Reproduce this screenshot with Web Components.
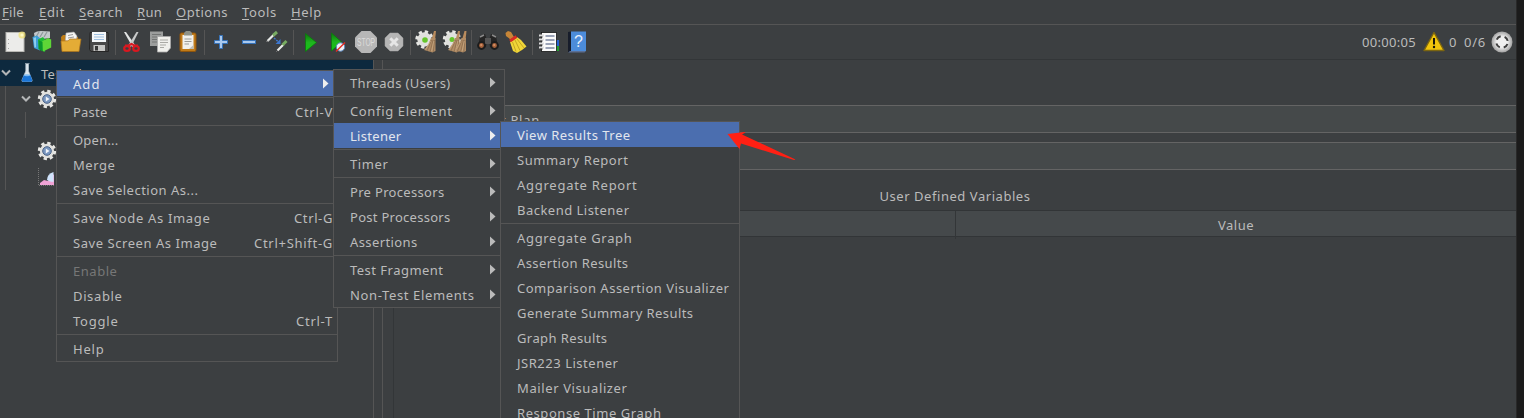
<!DOCTYPE html>
<html lang="en"><head><meta charset="utf-8"><title>JMeter</title>
<style>html,body{margin:0;height:100%;overflow:hidden;background:#1b1b1b}body{font:13px/25px "Noto Sans","Open Sans",sans-serif;color:#bbb}</style></head><body>
<jm-app></jm-app>
<script>
const define=(name,html,setup)=>customElements.define(name,class extends HTMLElement{
  connectedCallback(){
    if(this.shadowRoot)return;
    const t=document.createElement('template');
    t.innerHTML=typeof html==='function'?html(this):html;
    this.attachShadow({mode:'open'}).append(t.content.cloneNode(true));
    if(setup)setup(this);
  }
});

const gear=(s='')=>`<g ${s}><circle r="7.2" fill="#e0e0dd"/><circle r="7.8" fill="none" stroke="#e6e6e3" stroke-width="2.8" stroke-dasharray="3.3 2.826"/></g>`;
const brush=`<path d="M18.5 3 20.5 3 19.5 12 16 12Z" fill="#b98c5e"/><path d="M15.5 10 20 10 20 23 17 24.5 8.5 22 13 16Z" fill="#b08c66"/><path d="M16 12 11.5 23M17.5 12 14.5 24M19 12 17.8 24" stroke="#86694a" stroke-width=".7" fill="none"/><path d="M15.2 13 10 21.5M18.3 13 16.2 23" stroke="#d0b28c" stroke-width=".6"/>`;
const green='<linearGradient id="g" x2="0" y2="1"><stop stop-color="#0a7a0a"/><stop offset=".5" stop-color="#1fb51f"/><stop offset="1" stop-color="#12c512"/></linearGradient>';
const icons={
file:`<rect x="5" y="4.5" width="18" height="19" fill="#ececea" stroke="#b9b9b5"/><path d="M7.5 11v1M7.5 15v1M7.5 20v1" stroke="#aaa"/><circle cx="21" cy="7" r="3.6" fill="#f3e36d" opacity=".7"/><circle cx="21" cy="7" r="1.6" fill="#fff9c4"/>`,
templates:`<path d="M5 5 8 3.5 12 3 21 3.5 21 10 6 12Z" fill="#c3c9cc"/><path d="M7 9 10 4M11 9 14 4M15 9 18 4" stroke="#8f979b" fill="none" stroke-width="1.2"/><path d="M3.5 9 8 7.5 12 11 11 22.5 5 20Z" fill="#3f9fd6"/><path d="M4.5 10 7 9.3V19.5L5.5 19Z" fill="#8ccdf0"/><path d="M9 11.5 14 9 17 13 16 24 10 21Z" fill="#20bb36"/><path d="M13 13.5 19 10 22.2 11.5V19.5L14 23.5Z" fill="#5ed637"/><path d="M9.5 12V21L13.5 23.5V14Z" fill="#0b982c"/>`,
open:`<path d="M4 9 6 7H11L12 9H21L22 23H5Z" fill="#bd7c15"/><path d="M9 5 17 4 20 8 19 16 8 16Z" fill="#f5f5f3" stroke="#aaa" stroke-width=".6"/><path d="M11 7.5 16 6.5M11 10 17 9" stroke="#999"/><path d="M4 13 11 12.8 13 11 24 11 22 23.5 5 23.5Z" fill="#e4ac36" stroke="#ad741b" stroke-width=".7"/>`,
save:`<path d="M5 4.5H23L23.5 23.5H6L4.5 21.5Z" fill="#484848" stroke="#262626"/><rect x="7" y="4" width="14" height="10" fill="#f3f6f8"/><path d="M9 6.5H19M9 9H19M9 11.5H19" stroke="#9dbfe0"/><rect x="8.5" y="17" width="11.5" height="6" fill="#c6c6c4"/><rect x="10" y="18" width="3" height="4.5" fill="#383838"/>`,
cut:`<path d="M6 4 8 4 17 17 14.5 19Z" fill="#e2e4e4"/><path d="M20.5 4 18.5 4 10.5 17 13 19Z" fill="#c8caca"/><g fill="none" stroke="#d91820" stroke-width="2.2"><ellipse cx="9" cy="20.5" rx="2.8" ry="2.4"/><ellipse cx="18" cy="20.5" rx="2.8" ry="2.4"/><path d="M7 17.5H10.5L13.5 16 16.5 17.5H20"/></g>`,
copy:`<path d="M4 3.5H17V18H4Z" fill="#9c9e9d"/><path d="M6 6.5H15M6 9H15M6 11.5H11M6 14H11" stroke="#747675"/><path d="M11.5 8.5H24.5V20L21 24H11.5Z" fill="#f0f0ec" stroke="#aaa" stroke-width=".8"/><path d="M14 12H22M14 14.5H22M14 17H20M14 19.5H18" stroke="#aaaaa5"/>`,
paste:`<rect x="6" y="5" width="16" height="18.5" rx="1.5" fill="#c07b19" stroke="#90550c"/><rect x="8.5" y="7" width="11" height="14" fill="#f1f1ed"/><path d="M10 5 12 3H16L18 5V7.5H10Z" fill="#8e9187"/><path d="M10.5 11H17.5M10.5 13.5H17.5M10.5 16H15" stroke="#9b9b97"/><path d="M15 21 19.5 21 19.5 17Z" fill="#bdbdb7"/>`,
plus:`<path d="M12.5 7.5H15.5V12.5H20.5V15.5H15.5V20.5H12.5V15.5H7.5V12.5H12.5Z" fill="#aac9ee" stroke="#3672b8"/>`,
minus:`<rect x="7.5" y="12.5" width="13" height="3" fill="#aac9ee" stroke="#3672b8"/>`,
toggle:`<path d="M4.5 13 10.5 7M14.5 22.5 20.5 16.5" stroke="#e9ebe9" stroke-width="2.2"/><path d="M10 7.5 14 4M19.5 17 23.5 13" stroke="#78ab62" stroke-width="3"/><path d="M3.5 14 5 12.5M13.5 23.5 15 22" stroke="#999" stroke-width="1"/><path d="M11 10 15.5 14" stroke="#3f78ce" stroke-width="1.4" stroke-dasharray="2 1"/><path d="M17.5 11V16H12.5Z" fill="#3c77d0"/>`,
play:`${green}<path d="M9.5 5.5 20.5 14.5 9.5 23.5Z" fill="url(#g)" stroke="#0b780e" stroke-width=".8"/>`,
playnt:`${green}<path d="M7.5 5 17.5 14 7.5 23Z" fill="url(#g)" stroke="#0b780e" stroke-width=".8"/><circle cx="16.5" cy="19" r="4.2" fill="#eef1f5" stroke="#5c88c0" stroke-width="1"/><path d="M12 23.5 21 14.5" stroke="#e42b22" stroke-width="1.5"/>`,
stop:`<path d="M9.5 3H18.5L25 9.5V18.5L18.5 25H9.5L3 18.5V9.5Z" fill="#b7b7b7"/><text x="14" y="17.6" text-anchor="middle" textLength="18" lengthAdjust="spacingAndGlyphs" font-family="Liberation Sans" font-size="10" fill="#dcdcdc">STOP</text>`,
shutdown:`<path d="M10 5H18L23 10V18L18 23H10L5 18V10Z" fill="#b5b5b5" stroke="#a5a5a5" stroke-width=".5"/><path d="M10.3 10.3 17.7 17.7M17.7 10.3 10.3 17.7" stroke="#e6e6e6" stroke-width="3"/>`,
clear:`${gear('transform="translate(11.5 11.5)"')}<circle cx="12" cy="12" r="2.8" fill="#66c52c"/><g transform="translate(2.5 0)">${brush}</g>`,
clearall:`${gear('transform="translate(11 11.5)"')}<circle cx="11" cy="11.5" r="2.5" fill="#66c52c"/><g transform="translate(-1.5 0)">${brush}</g><g transform="translate(5 0)">${brush}</g>`,
search:`<path d="M6 8 11 6 13 12 12 19 4 19Z" fill="#242424"/><path d="M22 8 17 6 15 12 16 19 24 19Z" fill="#242424"/><path d="M6 9 10 7M22 9 18 7" stroke="#8a8a8a" stroke-width="1.4"/><rect x="11" y="10" width="6" height="6" fill="#555"/><g fill="#a9643c" stroke="#1c1c1c" stroke-width="2"><circle cx="7.5" cy="17.5" r="3.4"/><circle cx="20.5" cy="17.5" r="3.4"/></g><circle cx="7.2" cy="17" r="1.1" fill="#d79269"/><circle cx="20.2" cy="17" r="1.1" fill="#d79269"/>`,
broom:`<path d="M3.5 5 6 3 9 4 12 9 8.5 11.5 4 8Z" fill="#c68537"/><path d="M8 14 15 9 19 12 24.5 18.5 20 22 15 25 11 23Z" fill="#f0d638"/><path d="M10.5 14 14 23.5M13 12 18 22.5M15 11 22 20" stroke="#ba9a1c" stroke-width=".8"/><path d="M8 13 14.5 8.5" stroke="#d62c24" stroke-width="3"/>`,
list:`<rect x="20" y="12" width="4" height="6" fill="#2562d4"/><rect x="20" y="18" width="4" height="5" fill="#229b32"/><rect x="6.5" y="4.5" width="15" height="19" fill="#fafafa" stroke="#151515" stroke-width=".8"/><path d="M10.5 8H19.5M10.5 12H19.5M10.5 16H19.5M10.5 20H19.5" stroke="#3c4c74" stroke-width="1"/><path d="M4 7.5H9M4 11.5H9M4 15.5H9M4 19.5H9" stroke="#ddd" stroke-width="2"/><path d="M5 9H8M5 13H8M5 17H8M5 21H8" stroke="#333" stroke-width=".6"/>`,
help:`<path d="M5 4 8 3.5V23L5 24.5Z" fill="#171d2b"/><rect x="8" y="3.5" width="15" height="19.5" fill="#4c8cda"/><path d="M5 24.5H21.5L23 23H7Z" fill="#5b6f94"/><text x="15.4" y="19" text-anchor="middle" font-size="16" font-family="Liberation Sans" fill="#e6effb">?</text>`,
warn:`<path d="M14 4.5 24 22.5H4Z" fill="#f1c40c" stroke="#7c6610" stroke-width="1.4" stroke-linejoin="round"/><path d="M14 10V16.5" stroke="#17150b" stroke-width="2"/><circle cx="14" cy="19" r="1.2" fill="#17150b"/>`,
status:`<radialGradient id="s"><stop offset=".5" stop-color="#f0f0f0"/><stop offset="1" stop-color="#a2a2a2"/></radialGradient><circle cx="14" cy="14" r="10.5" fill="url(#s)"/><circle cx="14" cy="14" r="5.8" fill="none" stroke="#3e3e3e" stroke-width="2" stroke-dasharray="5 4.11" stroke-dashoffset="-2.05"/>`,
flask:`<path d="M12 4.5H16.5M12.8 5V12L9 21Q8.5 22.5 9.8 22.5H18.3Q19.5 22.5 19 21L15.5 12V5" fill="#dce6ed" stroke="#bac6ce" stroke-width=".7"/><path d="M10.8 16H17.3L19.2 21Q19.5 22.7 18 22.7H10Q8.5 22.7 8.9 21Z" fill="#1975d8"/><ellipse cx="14" cy="16.3" rx="3.2" ry="1" fill="#7ebaf0"/>`,
gear:`${gear('transform="translate(14 14)"')}<circle cx="14" cy="14" r="4.3" fill="#7896bf" stroke="#4a6286"/><path d="M12.8 11.5 16.5 14 12.8 16.5Z" fill="#f2f5fa"/>`,
graph:`<path d="M5.5 5V22.5H22" stroke="#777" fill="none" stroke-dasharray="1 1"/><path d="M7 22V20L11 17 15 18 21 11V22Z" fill="#efa2d5"/><path d="M14 17Q14 11 20.5 9V19Q17 19 14 17Z" fill="#cfe3fb"/>`
};
define('jm-icon',h=>`<style>:host{display:block;flex:none;width:28px;height:28px}svg{display:block}</style><svg width="28" height="28" viewBox="0 0 28 28">${icons[h.getAttribute('name')]}</svg>`);

/* A label spaced out to the given advance width. */
define('jm-label','<style>:host{display:inline-block;white-space:pre;flex:none}::slotted(u){text-underline-offset:2px}</style><span><slot></slot></span>',h=>{
  const w=+h.getAttribute('w'),s=h.shadowRoot.querySelector('span');
  if(w){const n=s.getBoundingClientRect().width;s.style.letterSpacing=((w-n)/h.textContent.length)+'px';h.style.width=w+'px'}
});

define('jm-menubar',`<style>:host{display:flex;height:24px;border-bottom:1px solid #555;padding-left:2px}jm-label{margin-right:var(--g)}</style>`+
[['File',22,15],['Edit',26,14],['Search',44,14],['Run',25,14],['Options',52,14],['Tools',35,14],['Help',31,0]].map(([t,w,g])=>`<jm-label w="${w}" style="--g:${g}px"><u>${t[0]}</u>${t.slice(1)}</jm-label>`).join(''));

define('jm-toolbar',`<style>:host{display:flex;align-items:center;height:34px;border-bottom:1px solid #333638;padding-left:1px}
i{flex:none;width:1px;height:25px;background:#555;margin:0 2px}.r{margin-left:auto;display:flex;align-items:center}.r jm-label{padding-top:1px}</style>`+
['file templates open save','cut copy paste','plus minus toggle','play playnt stop shutdown','clear clearall','search broom','list help'].map(g=>g.split(' ').map(n=>`<jm-icon name="${n}"></jm-icon>`).join('')).join('<i></i>')+
`<div class="r"><jm-label w="54">00:00:05</jm-label><jm-icon name="warn" style="margin-left:4px"></jm-icon><jm-label w="8" style="margin-left:1px">0</jm-label><jm-label w="22" style="margin-left:7px">0/6</jm-label><jm-icon name="status" style="margin-left:2px"></jm-icon></div>`);

define('jm-chevron','<style>:host{display:block;flex:none;width:10px;height:8px}svg{display:block}</style><svg width="10" height="8"><path d="M1 1.5 5 5.5 9 1.5" fill="none" stroke="#b4b6b7" stroke-width="2"/></svg>');
define('jm-node',`<style>:host{display:flex;align-items:center;height:26px;box-sizing:border-box}</style><slot></slot>`);
define('jm-tree',`<style>:host{display:block;width:373px;flex:none;border-right:1px solid #555}
jm-node:first-of-type{background:#0d293e}.kids{margin-left:5px;border-left:1px solid #555;height:104px}.kids jm-node{background:none;padding-left:15px}.leaf{height:26px;margin-left:19px;border-left:1px solid #555}.in{padding-left:27px!important}</style>
<jm-node style="padding-left:1px"><jm-chevron></jm-chevron><jm-icon name="flask" style="margin-left:2px"></jm-icon><jm-label w="57" style="padding-top:2px">Test Plan</jm-label></jm-node>
<div class="kids"><jm-node><jm-chevron></jm-chevron><jm-icon name="gear" style="margin-left:2px"></jm-icon></jm-node><div class="leaf"></div><jm-node class="in"><jm-icon name="gear"></jm-icon></jm-node><jm-node class="in"><jm-icon name="graph"></jm-icon></jm-node></div>`);

define('jm-field','<style>:host{display:block;box-sizing:border-box;height:28px;background:#45494a;border:solid #646464;border-width:1px 0;padding:2px 0 0 101px}</style><slot></slot>');
define('jm-table',`<style>:host{display:flex;flex-direction:column;flex:1;border-left:1px solid #333638;margin-left:10px}.h{display:grid;grid-template-columns:561px 1fr;height:25px;line-height:28px;border:solid #323537;border-width:1px 0;background:#45494b;text-align:center}.h div+div{border-left:1px solid #333638}</style><div class="h"><div></div><div><jm-label w="36">Value</jm-label></div></div>`);
define('jm-panel',`<style>:host{display:flex;flex-direction:column;flex:1;margin-left:8px;border-left:1px solid #555}
.f{display:grid;gap:9px;padding-top:45px;margin-left:10px}.t{height:40px;line-height:52px;text-align:center;margin-left:11px}</style>
<div class="f"><jm-field><jm-label w="46">st Plan</jm-label></jm-field><jm-field></jm-field></div><div class="t"><jm-label w="151">User Defined Variables</jm-label></div><jm-table></jm-table>`);

define('jm-item',h=>`<style>:host{display:flex;height:25px;line-height:26px;padding:0 4px 0 16px;color:#bbb}:host([on]){background:#4b6eaf;color:#e2e6ee}:host([off]){color:#777}
.k{margin-left:auto}svg{margin:7px 4px 0 auto}</style><jm-label w="${+h.getAttribute('w')+.5}">${h.textContent}</jm-label>`+
(h.hasAttribute('key')?`<jm-label class="k" w="${h.getAttribute('kw')}">${h.getAttribute('key')}</jm-label>`:'')+
(h.hasAttribute('sub')?`<svg width="6" height="11"><path d="M0 .5 5.5 5.5 0 10.5Z" fill="${h.hasAttribute('on')?'#eee':'#bbb'}"/></svg>`:''));
define('jm-sep','<style>:host{display:block;height:1px;margin:1px 0;background:#555}</style>');
define('jm-menu','<style>:host{display:block;position:absolute;box-sizing:border-box;background:#3c3f41;border:1px solid #555}</style><slot></slot>');

const rows=a=>a.map(r=>r?`<jm-item w="${r[1]}" ${r[2]||''}>${r[0]}</jm-item>`:'<jm-sep></jm-sep>').join('');
const m1=[['Add',27,'on sub'],0,['Paste',34,'key="Ctrl-V" kw="38"'],0,['Open...',45],['Merge',42],['Save Selection As...',125],0,['Save Node As Image',137,'key="Ctrl-G" kw="39"'],['Save Screen As Image',144,'key="Ctrl+Shift-G" kw="79"'],0,['Enable',44,'off'],['Disable',49],['Toggle',45,'key="Ctrl-T" kw="37"'],0,['Help',31]];
const m2=[['Threads (Users)',100,'sub'],0,['Config Element',102,'sub'],['Listener',51,'on sub'],0,['Timer',38,'sub'],0,['Pre Processors',94,'sub'],['Post Processors',100,'sub'],['Assertions',67,'sub'],0,['Test Fragment',93,'sub'],['Non-Test Elements',124,'sub']];
const m3=[['View Results Tree',113,'on'],['Summary Report',111],['Aggregate Report',120],['Backend Listener',112],0,['Aggregate Graph',115],['Assertion Results',111],['Comparison Assertion Visualizer',212],['Generate Summary Results',176],['Graph Results',90],['JSR223 Listener',101],['Mailer Visualizer',110],['Response Time Graph',144]];
define('jm-arrow','<style>:host{display:block;position:absolute;left:727px;top:130px}svg{display:block}</style><svg width="70" height="31"><path d="M.5 4 17.5 2 18.5 2.5 15 4.5 68.5 29.5 67 30 14 13.5 12.5 19Z" fill="#ff2014"/></svg>');
define('jm-app',`<style>:host{display:flex;flex-direction:column;position:relative;overflow:hidden;width:1516px;height:418px;background:#3c3f41;border-right:1px solid #292929}main{display:flex;flex:1;min-height:0}</style>
<jm-menubar></jm-menubar><jm-toolbar></jm-toolbar><main><jm-tree></jm-tree><jm-panel></jm-panel></main>
<jm-menu style="left:56px;top:70px;width:282px">${rows(m1)}</jm-menu>
<jm-menu style="left:333px;top:69px;width:172px">${rows(m2)}</jm-menu>
<jm-menu style="left:500px;top:121px;width:240px">${rows(m3)}</jm-menu><jm-arrow></jm-arrow>`);
</script></body></html>
